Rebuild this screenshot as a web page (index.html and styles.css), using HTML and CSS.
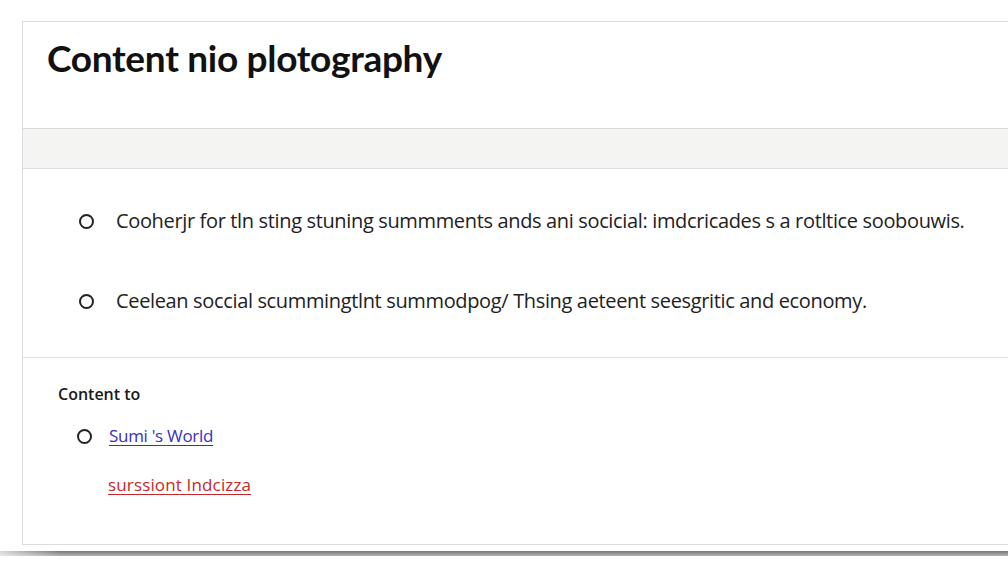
FILE: index.html
```html
<!DOCTYPE html>
<html lang="en">
<head>
<meta charset="utf-8">
<title>Content nio plotography</title>
<link rel="stylesheet" href="styles.css">
</head>
<body>
<div class="page">
  <section class="card">
    <header class="card-head">
      <h1 class="title">Content nio plotography</h1>
    </header>
    <div class="band"></div>
    <ul class="list">
      <li class="item"><span class="dot"></span><span>Cooherjr for tln sting stuning summments ands ani socicial: imdcricades s a rotltice soobouwis.</span></li>
      <li class="item"><span class="dot"></span><span>Ceelean soccial scummingtlnt summodpog/ Thsing aeteent seesgritic and economy.</span></li>
    </ul>
    <div class="foot">
      <h2 class="sub">Content to</h2>
      <div class="link-row"><span class="dot small"></span><a class="link blue" href="#">Sumi 's World</a></div>
      <div class="link-row plain"><a class="link red" href="#">surssiont Indcizza</a></div>
    </div>
  </section>
  <div class="shadow"></div>
</div>
</body>
</html>
```
FILE: styles.css
```css
html, body {
  margin: 0;
  padding: 0;
  background: #ffffff;
  overflow: hidden;
}
.page {
  padding-top: 21px;
  width: 1008px;
  height: 567px;
  overflow: hidden;
  font-family: "Open Sans", "Noto Sans", sans-serif;
  color: #1f1f1f;
}
.card {
  margin-left: 22px;
  width: 1020px;
  border: 1px solid #dcdcdc;
  border-right: none;
  background: #fff;
}
.card-head {
  height: 106px;
  padding-left: 24px;
  display: flex;
  align-items: flex-start;
}
.title {
  margin: 13px 0 0 0;
  font-family: "Lato", sans-serif;
  font-weight: 700;
  font-size: 37px;
  letter-spacing: -0.3px;
  color: #111;
}
.band {
  height: 39px;
  background: #f4f4f2;
  border-top: 1px solid #d9d9d9;
  border-bottom: 1px solid #dedede;
}
.list {
  list-style: none;
  margin: 0;
  padding: 38px 0 34px 56px;
  height: 189px;
  box-sizing: border-box;
  border-bottom: 1px solid #e0e0e0;
  display: flex;
  flex-direction: column;
  gap: 52px;
}
.item {
  display: flex;
  align-items: center;
  gap: 22px;
  font-size: 20px;
  line-height: 28px;
  letter-spacing: -0.35px;
  color: #222;
}
.dot {
  flex: none;
  width: 11px;
  height: 11px;
  border: 2px solid #222;
  border-radius: 50%;
}
.dot.small {
  width: 11px;
  height: 11px;
}
.foot {
  height: 186px;
  box-sizing: border-box;
  padding: 26px 0 0 35px;
}
.sub {
  margin: 0;
  font-size: 16px;
  font-weight: 600;
  line-height: 20px;
  color: #1a1a1a;
  letter-spacing: 0;
}
.link-row {
  display: flex;
  align-items: center;
  gap: 17px;
  margin-top: 22px;
  padding-left: 19px;
  height: 20px;
}
.link-row.plain {
  margin-top: 29px;
  padding-left: 50px;
}
.link {
  font-size: 17px;
  line-height: 20px;
  letter-spacing: -0.3px;
  text-decoration: underline;
  text-underline-offset: 3px;
}
.blue { color: #3a2fc2; }
.red { color: #c8282b; letter-spacing: 0.15px; }
.shadow {
  margin-top: 6px;
  height: 5px;
  background: linear-gradient(to bottom, #767676, #b5b5b5);
  -webkit-mask-image: linear-gradient(to right, rgba(0,0,0,0.3), #000 60px);
  mask-image: linear-gradient(to right, rgba(0,0,0,0.3), #000 60px);
}
```
